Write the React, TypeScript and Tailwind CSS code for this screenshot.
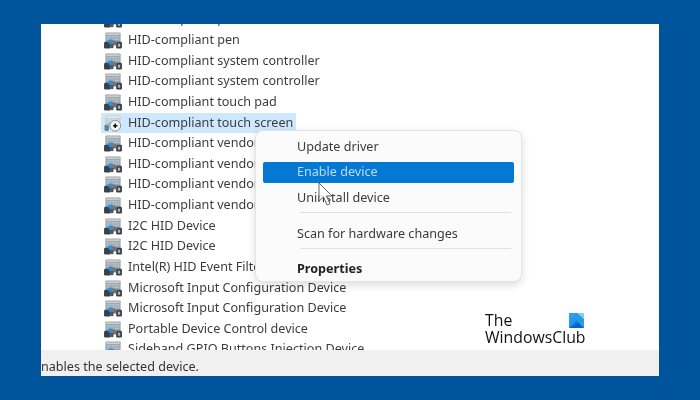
const names = [
  "HID-compliant pen",
  "HID-compliant pen",
  "HID-compliant system controller",
  "HID-compliant system controller",
  "HID-compliant touch pad",
  "HID-compliant touch screen",
  "HID-compliant vendor-defined device",
  "HID-compliant vendor-defined device",
  "HID-compliant vendor-defined device",
  "HID-compliant vendor-defined device",
  "I2C HID Device",
  "I2C HID Device",
  "Intel(R) HID Event Filter",
  "Microsoft Input Configuration Device",
  "Microsoft Input Configuration Device",
  "Portable Device Control device",
  "Sideband GPIO Buttons Injection Device",
];

function DeviceIcon({ disabled }: { disabled?: boolean }) {
  return (
    <svg width="20" height="17" viewBox="0 0 21 19" className="shrink-0">
      <rect x="2" y="0.5" width="17" height="11" rx="1" fill={disabled ? "#c3cad0" : "#98a2aa"} />
      <rect x="3" y="1.5" width="15" height="2" fill={disabled ? "#e8ebee" : "#c9ced3"} />
      <path d="M3.5 5.5h14M3.5 8h14" stroke={disabled ? "#eef0f2" : "#dfe3e6"} strokeWidth="1" />
      <path d="M6 4.5v6M9 4.5v6M12 4.5v6M15 4.5v6" stroke={disabled ? "#c3cad0" : "#98a2aa"} strokeWidth="0.8" />
      {disabled ? (
        <>
          <rect x="1" y="11" width="5" height="7" rx="1.5" fill="#6f7c88" />
          <rect x="4" y="8.5" width="5" height="3.5" fill="#8cc3ee" />
          <circle cx="13" cy="12" r="6" fill="#f4f4f4" stroke="#8d8d8d" strokeWidth="1.1" />
          <path d="M10.5 12h5M13 9.5v5" stroke="#111111" strokeWidth="1.7" />
        </>
      ) : (
        <>
          <rect x="0.5" y="11" width="7.5" height="7.5" rx="1.5" fill="#36414c" />
          <rect x="14" y="11" width="6.5" height="7.5" rx="1.5" fill="#36414c" />
          <rect x="5.5" y="8.5" width="5.5" height="4.5" rx="0.5" fill="#2a8fe0" />
          <rect x="10.5" y="10" width="3.5" height="5" fill="#8a6e55" />
          <rect x="8" y="13" width="3" height="5" fill="#4a545e" />
          <rect x="16" y="13" width="2.5" height="3.5" fill="#aab3bb" />
        </>
      )}
    </svg>
  );
}

function Row({ name, active }: { name: string; active: boolean }) {
  return (
    <div className="flex h-[20.63px] shrink-0 items-center pl-[60px]">
      <div className={active ? "flex h-[20.63px] items-center gap-[5px] bg-[#cde8ff] pl-[2px] pr-[3px]" : "flex h-[20.63px] items-center gap-[5px] pl-[2px] pr-[3px]"}>
        <DeviceIcon disabled={active} />
        <span className="whitespace-nowrap">{name}</span>
      </div>
    </div>
  );
}

function MenuItem({ label, bold, selected }: { label: string; bold?: boolean; selected?: boolean }) {
  return (
    <div className={
      selected
        ? "mx-[7px] flex h-[21px] items-center rounded-[2px] bg-[#0578d4] pl-[34px] pt-[1px] text-[#b9dcf8]"
        : bold
        ? "mx-[7px] flex h-[21px] items-center pl-[34px] pt-[1px] font-bold text-[#222222]"
        : "mx-[7px] flex h-[21px] items-center pl-[34px] pt-[1px] text-[#3a3a3a]"
    }>
      {label}
    </div>
  );
}

export default function App() {
  return (
    <div className="h-[400px] w-[700px] overflow-hidden bg-[#00549b] pl-[41px] pt-[24px]" style={{ fontFamily: '"Noto Sans", "Open Sans", sans-serif' }}>
      <div className="relative flex h-[352px] w-[618px] flex-col overflow-hidden bg-white text-[12.6px] text-[#3c3c3c] blur-[0.45px]">
        <div className="min-h-0 flex-1 overflow-hidden">
          <div className="-mt-[14.4px] flex flex-col">
            {names.map((n, i) => (
              <Row key={i} name={n} active={i === 5} />
            ))}
          </div>
        </div>
        <div className="flex h-[26px] shrink-0 items-center bg-[#f0f0f0] pt-[9px] text-[#333333]">nables the selected device.</div>

        <div className="absolute left-[214px] top-[106px] h-[152px] w-[267px] overflow-hidden rounded-[8px] border border-[#e4e4e4] bg-[#fbfbfb] pt-[5px] text-[12.6px] shadow-[0_3px_8px_rgba(0,0,0,0.14)]">
          <div className="flex flex-col gap-[4.5px]">
            <MenuItem label="Update driver" />
            <MenuItem label="Enable device" selected />
            <MenuItem label="Uninstall device" />
          </div>
          <div className="ml-[44px] mr-[10px] mt-[4px] h-px bg-[#e2e2e2]" />
          <div className="mt-[10px]"><MenuItem label="Scan for hardware changes" /></div>
          <div className="ml-[44px] mr-[10px] mt-[4px] h-px bg-[#e2e2e2]" />
          <div className="mt-[9px]"><MenuItem label="Properties" bold /></div>
        </div>

        <svg width="18" height="28" viewBox="0 0 18 28" className="absolute left-[277px] top-[158px]">
          <path d="M1 1v18l4.5-4 3.5 8 3-1.3-3.5-7.7H14z" fill="#ffffff" fillOpacity="0.85" stroke="#555555" strokeWidth="0.9" />
        </svg>

        <div className="absolute left-[444px] top-[288px] text-[15.8px] leading-[17px] text-[#111111]" style={{ fontFamily: '"Open Sans", sans-serif' }}>
          <div>The</div>
          <div>WindowsClub</div>
        </div>
        <svg width="15" height="15" viewBox="0 0 15 15" className="absolute left-[528px] top-[289px]">
          <rect width="15" height="15" fill="#2f9fe8" />
          <path d="M15 0v6L8 0z" fill="#7fd0f5" />
          <path d="M0 15l7.5-7.5L15 15z" fill="#0b63c9" />
          <path d="M0 15V7.5L7.5 0 15 7.5z" fill="#1f8fe6" opacity="0.5" />
        </svg>
      </div>
    </div>
  );
}
